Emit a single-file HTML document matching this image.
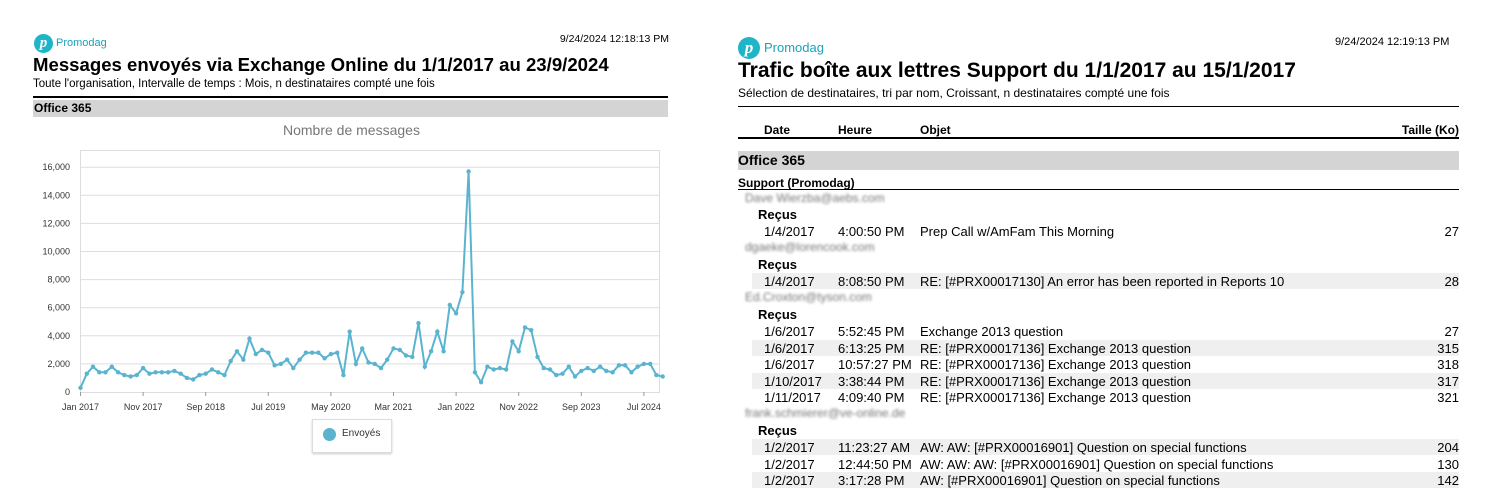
<!DOCTYPE html>
<html><head><meta charset="utf-8"><style>
body{margin:0;width:1486px;height:490px;background:#fff;font-family:"Liberation Sans",sans-serif;position:relative;overflow:hidden;color:#000}
.a{position:absolute;white-space:nowrap}
.logo{width:19px;height:19px;border-radius:50%;background:#1fb5c9;color:#fff;font:italic bold 15px "Liberation Serif",serif;text-align:center;line-height:18px}
.bl{filter:blur(1.4px);color:#777;font-size:12px}
.sh{position:absolute;left:752px;width:707px;height:16px;background:#efefef}
.r{font-size:13px}
</style></head><body>
<!-- LEFT -->
<div class="a logo" style="left:34px;top:34px">p</div>
<div class="a" style="left:56px;top:37px;font-size:11px;color:#1aa3b8">Promodag</div>
<div class="a" style="right:817px;top:33px;font-size:10.5px">9/24/2024 12:18:13 PM</div>
<div class="a" style="left:33px;top:54px;font-size:18.6px;font-weight:bold">Messages envoyés via Exchange Online du 1/1/2017 au 23/9/2024</div>
<div class="a" style="left:33px;top:78px;font-size:11.5px">Toute l'organisation, Intervalle de temps : Mois, n destinataires compté une fois</div>
<div class="a" style="left:33px;top:96px;width:635px;height:2px;background:#000"></div>
<div class="a" style="left:33px;top:100px;width:635px;height:17px;background:#d4d4d4"></div>
<div class="a" style="left:34px;top:101px;font-size:12px;font-weight:bold">Office 365</div>
<div class="a" style="left:283px;top:122px;font-size:14px;color:#777">Nombre de messages</div>
<svg class="a" style="left:0;top:0" width="700" height="470" id="ch" font-family="Liberation Sans" font-size="9" fill="#333">
<rect x="80.5" y="150.5" width="579" height="242" fill="none" stroke="#ddd"/>
</svg>
<div class="a" style="left:312px;top:419px;width:78px;height:32px;border:1px solid #ddd;box-shadow:0 1px 2px #ccc"></div>
<div class="a" style="left:323px;top:428px;width:13px;height:13px;border-radius:50%;background:#5ab4cf"></div>
<div class="a" style="left:342px;top:428px;font-size:10px;color:#333">Envoyés</div>
<!-- RIGHT -->
<div class="a logo" style="left:738px;top:37px;width:22px;height:22px;line-height:21px;font-size:17px">p</div>
<div class="a" style="left:764px;top:40px;font-size:13px;color:#1aa3b8">Promodag</div>
<div class="a" style="left:1335px;top:36px;font-size:11px">9/24/2024 12:19:13 PM</div>
<div class="a" style="left:738px;top:59px;font-size:21px;font-weight:bold">Trafic boîte aux lettres Support du 1/1/2017 au 15/1/2017</div>
<div class="a" style="left:738px;top:86px;font-size:12px">Sélection de destinataires, tri par nom, Croissant, n destinataires compté une fois</div>
<div class="a" style="left:738px;top:106px;width:721px;height:1px;background:#000"></div>
<div class="a r" style="left:764px;top:123px;font-size:12px;font-weight:bold">Date</div>
<div class="a r" style="left:838px;top:123px;font-size:12px;font-weight:bold">Heure</div>
<div class="a r" style="left:920px;top:123px;font-size:12px;font-weight:bold">Objet</div>
<div class="a r" style="right:27px;top:123px;font-size:12px;font-weight:bold">Taille (Ko)</div>
<div class="a" style="left:738px;top:137px;width:721px;height:2px;background:#000"></div>
<div class="a" style="left:738px;top:151px;width:721px;height:19px;background:#d4d4d4"></div>
<div class="a" style="left:738px;top:152px;font-size:14px;font-weight:bold">Office 365</div>
<div class="a" style="left:738px;top:176px;font-size:12px;font-weight:bold">Support (Promodag)</div>
<div class="a" style="left:738px;top:189px;width:721px;height:1px;background:#000"></div>
<div class="sh" style="top:273px"></div><div class="sh" style="top:340px"></div><div class="sh" style="top:373px"></div><div class="sh" style="top:439px"></div><div class="sh" style="top:472px"></div>
<div id="rows"></div>
<script>
var R=[["b","Dave Wierzba@aebs.com",191],["h","Reçus",207],["d","1/4/2017","4:00:50 PM","Prep Call w/AmFam This Morning","27",224],
["b","dgaeke@lorencook.com",240],["h","Reçus",257],["d","1/4/2017","8:08:50 PM","RE: [#PRX00017130] An error has been reported in Reports 10","28",274],
["b","Ed.Croxton@tyson.com",290],["h","Reçus",307],["d","1/6/2017","5:52:45 PM","Exchange 2013 question","27",324],
["d","1/6/2017","6:13:25 PM","RE: [#PRX00017136] Exchange 2013 question","315",341],
["d","1/6/2017","10:57:27 PM","RE: [#PRX00017136] Exchange 2013 question","318",357],
["d","1/10/2017","3:38:44 PM","RE: [#PRX00017136] Exchange 2013 question","317",374],
["d","1/11/2017","4:09:40 PM","RE: [#PRX00017136] Exchange 2013 question","321",390],
["b","frank.schmierer@ve-online.de",406],["h","Reçus",423],
["d","1/2/2017","11:23:27 AM","AW: AW: [#PRX00016901] Question on special functions","204",440],
["d","1/2/2017","12:44:50 PM","AW: AW: AW: [#PRX00016901] Question on special functions","130",457],
["d","1/2/2017","3:17:28 PM","AW: [#PRX00016901] Question on special functions","142",473]];
var h="";R.forEach(function(r){
if(r[0]=="b")h+='<div class="a bl" style="left:745px;top:'+r[2]+'px">'+r[1]+'</div>';
else if(r[0]=="h")h+='<div class="a" style="left:758px;top:'+r[2]+'px;font-size:13px;font-weight:bold">'+r[1]+'</div>';
else{var t=r[5];h+='<div class="a r" style="left:764px;top:'+t+'px">'+r[1]+'</div><div class="a r" style="left:838px;top:'+t+'px">'+r[2]+'</div><div class="a r" style="left:920px;top:'+t+'px">'+r[3]+'</div><div class="a r" style="right:27px;top:'+t+'px">'+r[4]+'</div>';}
});document.getElementById("rows").innerHTML=h;
var v=[0.3,1.3,1.8,1.4,1.4,1.8,1.4,1.2,1.1,1.2,1.7,1.3,1.4,1.4,1.4,1.5,1.3,1.0,0.9,1.2,1.3,1.6,1.4,1.2,2.2,2.9,2.3,3.8,2.7,3.0,2.8,1.9,2.0,2.3,1.7,2.3,2.8,2.8,2.8,2.4,2.7,2.8,1.2,4.3,2.0,3.1,2.1,2.0,1.7,2.3,3.1,3.0,2.6,2.5,4.9,1.8,2.9,4.3,2.9,6.2,5.6,7.1,15.7,1.4,0.7,1.8,1.6,1.7,1.6,3.6,2.9,4.6,4.4,2.5,1.7,1.6,1.2,1.3,1.8,1.1,1.5,1.7,1.5,1.8,1.5,1.4,1.9,1.9,1.4,1.8,2.0,2.0,1.2,1.1];
var s="",X0=80.5,dx=6.26,Y0=392,k=14.05;
for(var i=0;i<=8;i++){var y=Y0-i*2*k;if(i>0)s+='<line x1="80" x2="660" y1="'+y+'" y2="'+y+'" stroke="#ddd"/>';s+='<text x="70" y="'+(y+3)+'" text-anchor="end">'+(i?(i*2)+",000":"0")+'</text>';}
var L=["Jan 2017","Nov 2017","Sep 2018","Jul 2019","May 2020","Mar 2021","Jan 2022","Nov 2022","Sep 2023","Jul 2024"];
L.forEach(function(l,i){var x=X0+i*10*dx;s+='<line x1="'+x+'" x2="'+x+'" y1="392" y2="396" stroke="#999"/><text x="'+x+'" y="410" text-anchor="middle">'+l+'</text>';});
var p=v.map(function(a,i){return (X0+i*dx).toFixed(1)+","+(Y0-a*k).toFixed(1)}).join(" ");
s+='<polyline points="'+p+'" fill="none" stroke="#5ab4cf" stroke-width="2"/>';
v.forEach(function(a,i){s+='<circle cx="'+(X0+i*dx).toFixed(1)+'" cy="'+(Y0-a*k).toFixed(1)+'" r="2.2" fill="#5ab4cf"/>';});
document.getElementById("ch").insertAdjacentHTML("beforeend",s);
</script>
</body></html>
